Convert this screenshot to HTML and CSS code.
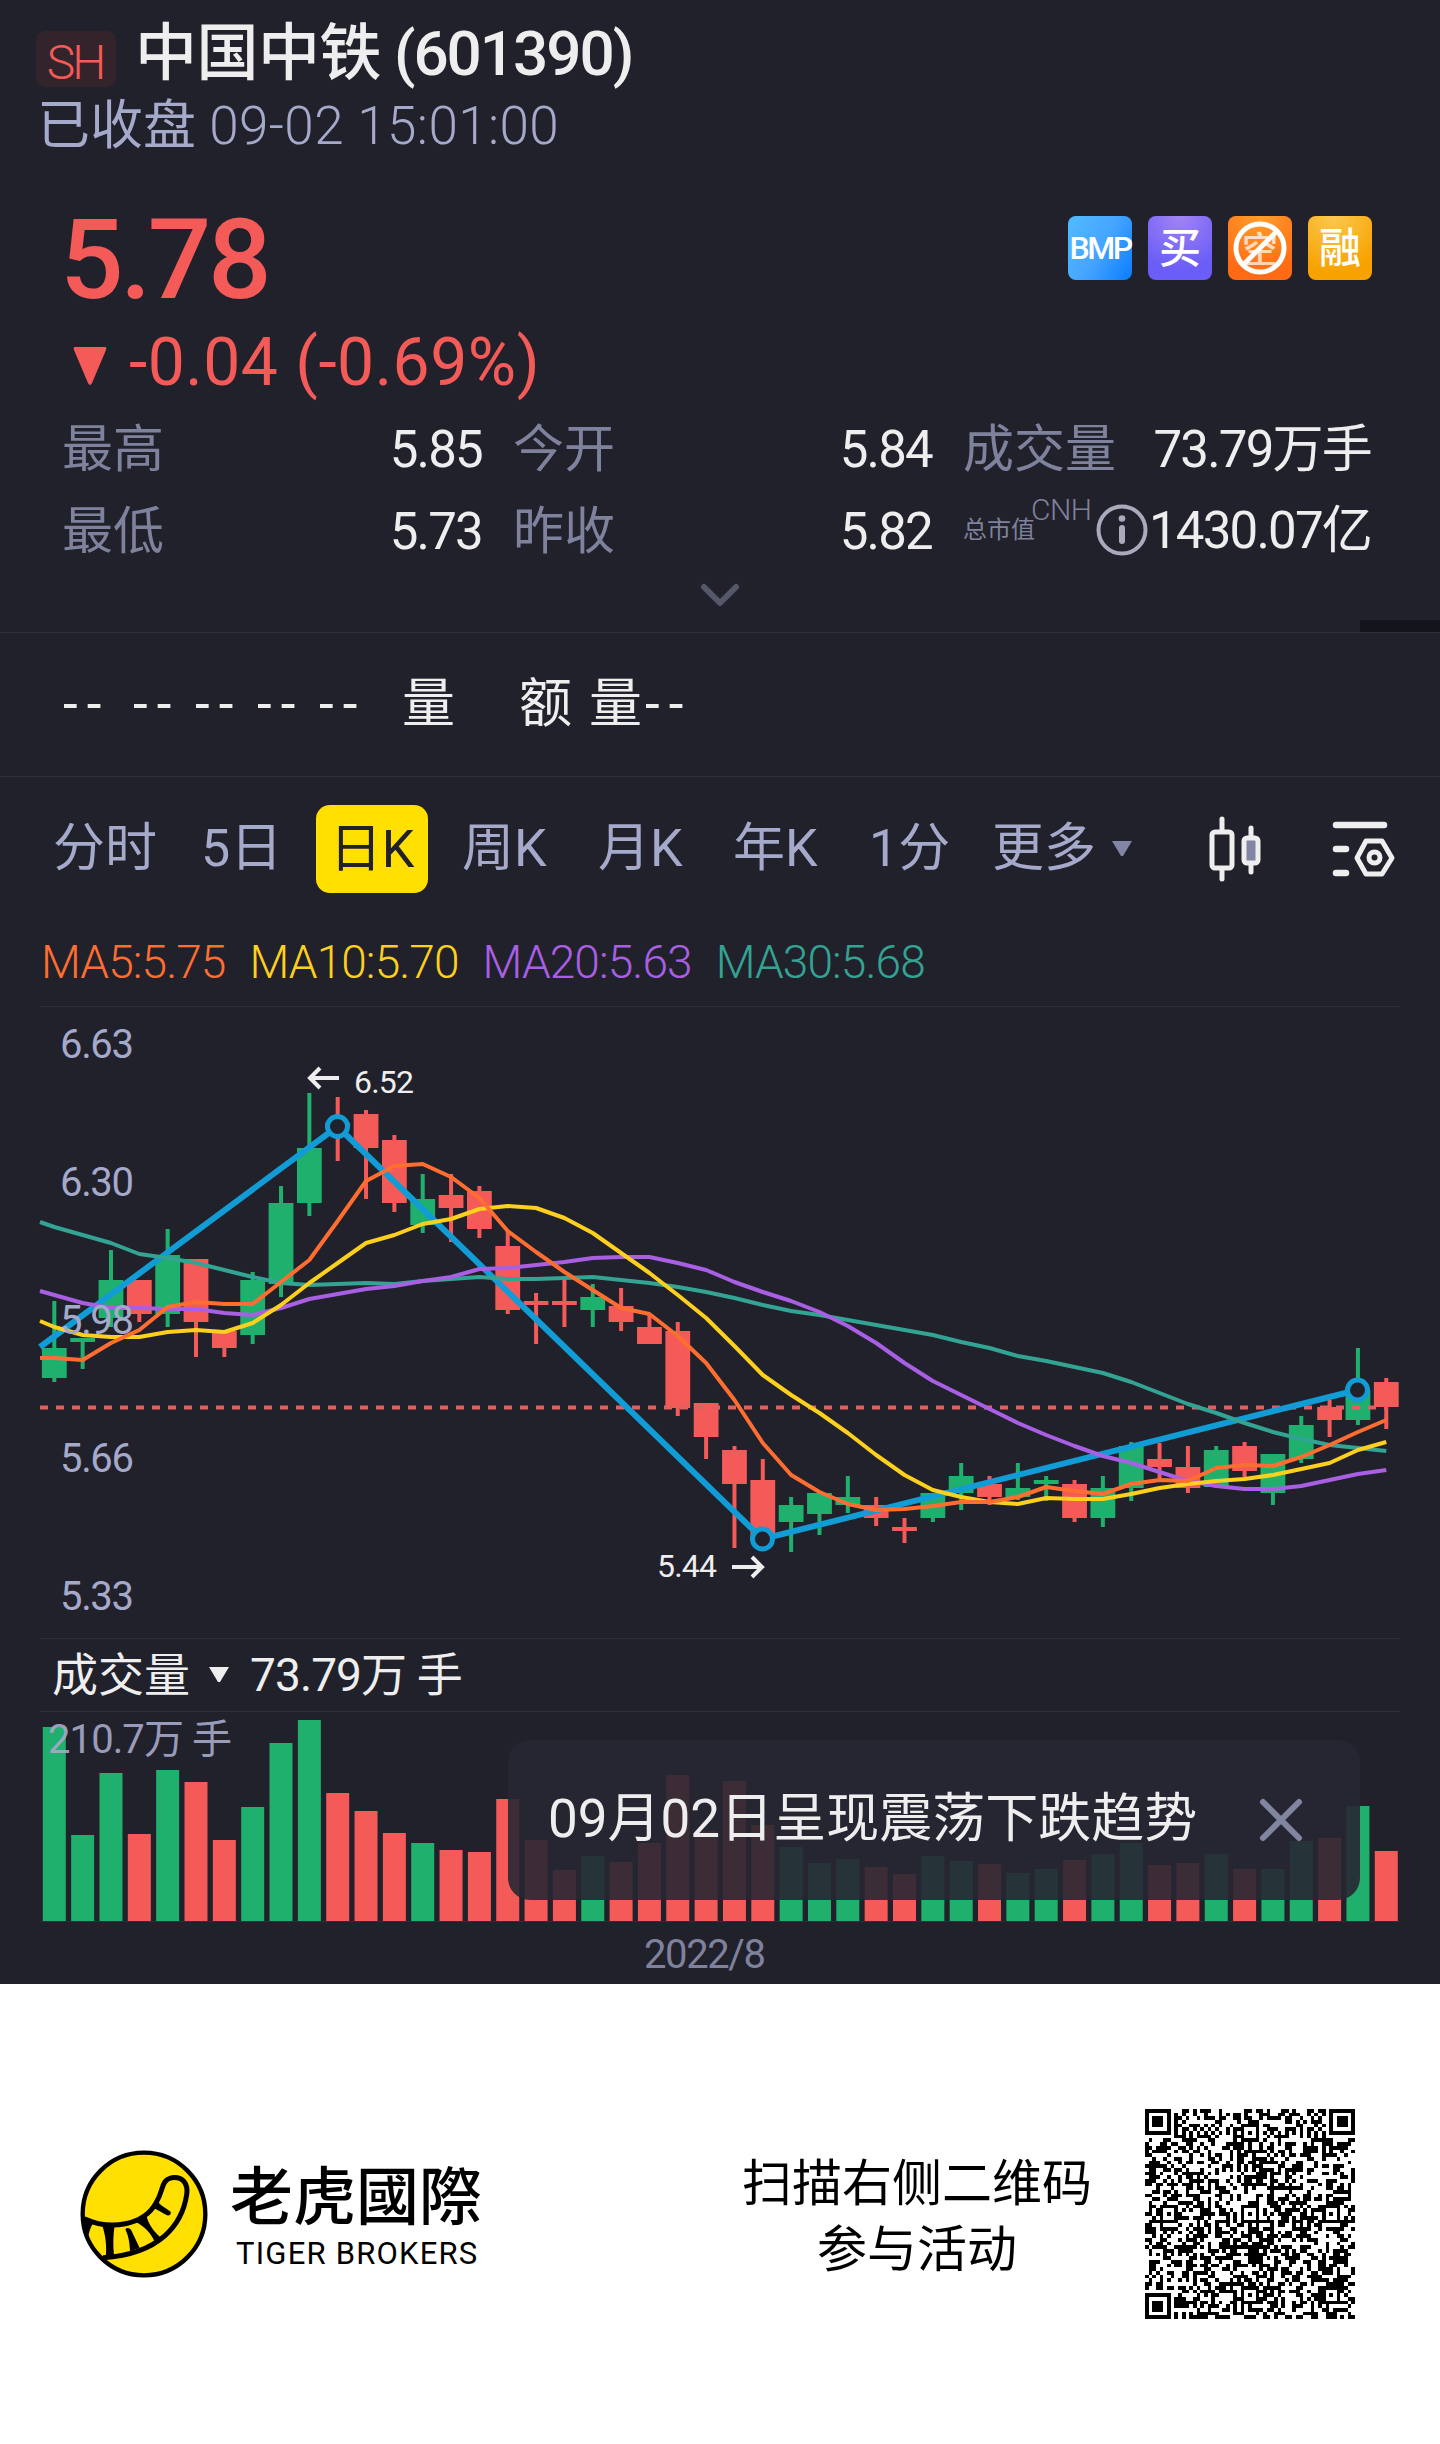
FILE: index.html
```html
<!DOCTYPE html>
<html lang="zh-CN">
<head>
  <meta charset="UTF-8">
  <meta name="viewport" content="width=device-width, initial-scale=1.0">
  <title>中国中铁 (601390)</title>
  <link rel="stylesheet" href="styles.css">
</head>
<body>

  <div class="quote">
    <header class="head">
      <div class="title-row">
        <span class="market">SH</span>
        <h1>中国中铁 <span class="code">(601390)</span></h1>
      </div>
      <div class="status">已收盘 <span class="time">09-02 15:01:00</span></div>
    </header>

    <section class="summary">
      <div class="price-row">
        <div class="price">5.78</div>
        <div class="badges">
          <span class="badge badge-bmp">BMP</span>
          <span class="badge badge-buy">买</span>
          <span class="badge badge-short"><i>空</i>
            <svg class="ban" viewBox="0 0 64 64"><circle cx="32" cy="32" r="24"/><path d="M16 48 48 16"/></svg>
          </span>
          <span class="badge badge-margin">融</span>
        </div>
      </div>
      <div class="change">
        <svg width="34" height="40" viewBox="0 0 34 40"><path d="M2 1H32Q34 1 33 4L19 37Q17 41 15 37L1 4Q0 1 2 1Z" fill="#f45a57"/></svg>
        <span>-0.04 (-0.69%)</span>
      </div>
      <div class="stats">
        <div class="stat"><label>最高</label><b>5.85</b></div>
        <div class="stat"><label>今开</label><b>5.84</b></div>
        <div class="stat"><label>成交量</label><b>73.79万手</b></div>
        <div class="stat"><label>最低</label><b>5.73</b></div>
        <div class="stat"><label>昨收</label><b>5.82</b></div>
        <div class="stat cap">
          <label>总市值</label><span class="cnh">CNH</span>
          <svg width="52" height="52" viewBox="0 0 52 52"><circle cx="26" cy="26" r="23.5" fill="none" stroke="#a9abbd" stroke-width="4"/><circle cx="26" cy="14.500" r="3.300" fill="#a9abbd"/><path d="M26 24V37" stroke="#a9abbd" stroke-width="6" stroke-linecap="round"/></svg>
          <b>1430.07亿</b>
        </div>
      </div>
      <div class="expand">
        <svg width="40" height="26" viewBox="0 0 40 26"><path d="M4 4 20 20 36 4" fill="none" stroke="#555869" stroke-width="6" stroke-linecap="round" stroke-linejoin="round"/></svg>
        <span class="corner"></span>
      </div>
    </section>

    <div class="depth">
      <span>--</span><span>--</span><span>--</span><span>--</span><span>--</span>
      <em>量</em><em>额</em><em>量</em><span>--</span>
    </div>

    <nav class="tabs">
      <a>分时</a>
      <a>5日</a>
      <a class="active">日K</a>
      <a>周K</a>
      <a>月K</a>
      <a>年K</a>
      <a>1分</a>
      <a>更多</a>
      <svg class="arrow" width="22" height="16" viewBox="0 0 22 16"><path d="M1 0H21L12 15H10Z" fill="#8285a3"/></svg>
      <svg width="54" height="66" viewBox="0 0 54 66" fill="none" stroke="#eee" stroke-width="5" stroke-linecap="round">
        <path d="M14 3V15M14 54V63M43 12V21M43 49V56"/>
        <rect x="4" y="16" width="20" height="36" rx="3"/>
        <rect x="36" y="22" width="14" height="25" rx="3" fill="#8285a3"/>
      </svg>
      <svg width="64" height="58" viewBox="0 0 64 58" fill="none" stroke="#eee" stroke-width="6.500" stroke-linecap="round" stroke-linejoin="round">
        <path d="M4 5H52M4 29H14M4 53H14"/>
        <path d="M34 21H50L60 38 50 54H34L25 38Z" stroke-width="5"/>
        <circle cx="42.500" cy="37.500" r="5.500" stroke-width="5"/>
      </svg>
    </nav>

    <div class="ma">
      <span class="ma5">MA5:5.75</span>
      <span class="ma10">MA10:5.70</span>
      <span class="ma20">MA20:5.63</span>
      <span class="ma30">MA30:5.68</span>
    </div>

    <svg id="kline" class="kline" width="1440" height="638" viewBox="0 0 1440 638"></svg>

    <div class="vol-head">
      <span>成交量</span>
      <svg width="22" height="16" viewBox="0 0 22 16"><path d="M1 0H21L12 15H10Z" fill="#eee"/></svg>
      <span class="vol-value">73.79万 手</span>
    </div>

    <div class="vol-wrap">
      <svg id="volume" width="1440" height="210" viewBox="0 0 1440 210"></svg>
      <div class="toast">
        <span>09月02日呈现震荡下跌趋势</span>
        <svg width="46" height="46" viewBox="0 0 46 46"><path d="M5 5 41 41M41 5 5 41" stroke="#8285a0" stroke-width="6" stroke-linecap="round"/></svg>
      </div>
    </div>
    <div class="date">2022/8</div>
  </div>

  <footer class="footer">
    <svg class="logo" width="128" height="128" viewBox="59 88 384 384">
      <circle cx="251" cy="280" r="184" fill="#ffe000" stroke="#000" stroke-width="13"/>
      <path d="M72 294C150 330 250 315 288 245C312 205 300 180 335 171C368 167 384 190 379 222C366 310 300 400 128 411" fill="none" stroke="#000" stroke-width="15"/>
      <path d="M66 288 100 304C90 320 86 335 83 352L68 325Z"/>
      <path d="M125 312 163 314C158 345 158 375 161 405L136 411C140 375 136 345 125 312Z"/>
      <path d="M195 326Q203 317 212 327L238 382 209 392C208 365 204 345 195 326Z"/>
      <path d="M227 304 258 284C264 310 278 330 300 350L283 363C270 335 252 318 227 304Z"/>
      <path d="M274 262 290 240C300 255 318 262 331 273Q333 286 320 284C304 276 290 264 274 262Z"/>
    </svg>
    <div class="brand">
      <div class="brand-cn">老虎國際</div>
      <div class="brand-en">TIGER BROKERS</div>
    </div>
    <div class="scan">扫描右侧二维码<br>参与活动</div>
    <svg id="qr" class="qr" width="210" height="210" viewBox="0 0 57 57" shape-rendering="crispEdges"></svg>
  </footer>

  <script src="chart.js"></script>
</body>
</html>
```

FILE: styles.css
```css
body {
  margin: 0;
  background-color: #fff;
  font-family: Roboto, "Noto Sans CJK SC", sans-serif;
  font-weight: 400;
  color: #eee;
}

svg {
  display: block;
  flex-shrink: 0;
}

h1, b, em, i {
  margin: 0;
  font-weight: inherit;
  font-style: normal;
}

.quote {
  width: 1440px;
  height: 1984px;
  background-color: #21212b;
  white-space: nowrap;
}

/* header */
.head {
  padding-top: 17px;
  height: 144px;
}

.title-row {
  display: flex;
  padding-left: 36px;
  height: 72px;
}

.market {
  width: 78px;
  height: 56px;
  margin: 14px 19px 0 0;
  padding-right: 2px;
  border-radius: 9px;
  background-color: #33242c;
  color: #f45a57;
  font-size: 48px;
  line-height: 64px;
  letter-spacing: -3px;
  text-align: center;
  font-weight: 300;
}

h1 {
  font-size: 62px;
  line-height: 74px;
  font-weight: 500;
  letter-spacing: -0.5px;
}

.code {
  letter-spacing: -2px;
  margin-left: -2px;
}

.status {
  padding-left: 37px;
  font-size: 53px;
  line-height: 74px;
  color: #a5a9ca;
}

.time {
  font-weight: 300;
  letter-spacing: 0.4px;
}

/* price */
.price-row {
  display: flex;
  justify-content: space-between;
  height: 158px;
  padding: 0 68px 0 60px;
}

.price {
  margin-top: 38px;
  font-size: 112px;
  line-height: 122px;
  font-weight: 500;
  letter-spacing: -3.5px;
  color: #f45a57;
}

.badges {
  display: flex;
  gap: 16px;
  margin-top: 55px;
}

.badge {
  position: relative;
  width: 64px;
  height: 64px;
  border-radius: 8px;
  font-size: 42px;
  line-height: 66px;
  font-weight: 500;
  text-align: center;
  color: #fff;
}

.badge-bmp {
  font-size: 32px;
  line-height: 64px;
  letter-spacing: -2.5px;
  background: linear-gradient(120deg, #50bcff, #46a5ff 50%, #0a7cff);
}

.badge-buy {
  background: radial-gradient(circle at 50% 0, #a284f2, #6a5df8 75%);
}

.badge-short {
  background: radial-gradient(circle at 50% 0, #ff9f2c, #ff6a14 80%);
}

.badge-short i {
  font-size: 36px;
  opacity: 0.7;
}

.badge-margin {
  background: radial-gradient(circle at 40% 0, #fcc850, #f7a200 75%);
}

.ban {
  position: absolute;
  left: 0;
  top: 0;
  fill: none;
  stroke: #fff;
  stroke-width: 5;
}

.change {
  display: flex;
  align-items: center;
  gap: 22px;
  height: 88px;
  padding-left: 73px;
  font-size: 66px;
  line-height: 92px;
  color: #f45a57;
  letter-spacing: 0.5px;
}

.change svg {
  margin-top: 5px;
}

.stats {
  display: grid;
  grid-template-columns: 420px 419px 408px;
  grid-auto-rows: 82px;
  column-gap: 31px;
  padding-left: 62px;
  font-size: 51px;
  line-height: 85px;
}

.stat {
  display: flex;
  justify-content: space-between;
}

.stat label {
  color: #7f829d;
}

.stat b {
  letter-spacing: -1.8px;
}

.cap {
  align-items: center;
  justify-content: flex-start;
}

.cap label {
  font-size: 24px;
}

.cnh {
  align-self: flex-start;
  margin-left: -4px;
  font-size: 30px;
  line-height: 42px;
  font-weight: 300;
  letter-spacing: -0.5px;
  color: #7f829d;
}

.cap svg {
  margin-left: auto;
}

.cap b {
  margin-left: 1px;
}

.expand {
  position: relative;
  display: flex;
  justify-content: center;
  height: 61px;
  padding-top: 12px;
  box-sizing: border-box;
}

.corner {
  position: absolute;
  right: 0;
  bottom: 0;
  width: 80px;
  height: 12px;
  background-color: #14141d;
}

.depth, .tabs {
  display: flex;
  align-items: center;
  height: 143px;
  border-top: 1px solid #2e2e3a;
}

.depth {
  padding-left: 63px;
  font-size: 53px;
  line-height: 147px;
}

.depth span {
  width: 62px;
  letter-spacing: 9px;
}

.depth span:first-child {
  width: 70px;
}

.depth em {
  margin-left: 20px;
}

.depth em:nth-of-type(1) {
  margin-left: 21px;
  margin-right: 44px;
}

.depth em:nth-of-type(3) {
  margin-left: 17px;
  margin-right: 3px;
}

/* period tabs */
.tabs {
  display: grid;
  grid-template-columns: 148px 115px 112px 170px 135px 136px 123px 119px 97px 124px 64px;
  padding-left: 53px;
  font-size: 52px;
  line-height: 90px;
  color: #a5a9ca;
}

.tabs .active {
  height: 88px;
  border-radius: 14px;
  background-color: #ffe000;
  color: #21212b;
  text-align: center;
}

.tabs .active + a {
  padding-left: 34px;
}

.ma {
  display: flex;
  gap: 24px;
  height: 80px;
  padding-left: 41px;
  font-size: 46px;
  line-height: 84px;
  font-weight: 300;
  letter-spacing: -0.9px;
}

.ma5 {
  color: #ff6e30;
}

.ma10 {
  color: #fdd01e;
}

.ma20 {
  color: #a95fe4;
}

.ma30 {
  color: #33a393;
}

.axis {
  fill: #a5a9ca;
  font-size: 40px;
}

.mark {
  fill: #eee;
  font-size: 32px;
}

/* volume */
.vol-head {
  display: flex;
  align-items: center;
  height: 72px;
  margin: 0 40px;
  padding-left: 12px;
  border-top: 1px solid #2e2e3a;
  border-bottom: 1px solid #2e2e3a;
  font-size: 46px;
  line-height: 74px;
}

.vol-head svg {
  margin: 0 20px 0 18px;
}

.vol-value {
  letter-spacing: -0.9px;
}

.vol-wrap {
  position: relative;
}

.toast {
  position: absolute;
  left: 508px;
  top: 28px;
  display: flex;
  align-items: center;
  justify-content: space-between;
  width: 852px;
  height: 160px;
  padding: 0 56px 0 40px;
  box-sizing: border-box;
  border-radius: 22px;
  background-color: rgba(39, 39, 51, 0.9);
  font-size: 53px;
  line-height: 60px;
}

.toast span {
  padding-bottom: 3px;
}

.date {
  padding-left: 644px;
  font-size: 40px;
  line-height: 65px;
  letter-spacing: -1.4px;
  color: #7f829d;
}

/* footer */
.footer {
  display: flex;
  align-items: center;
  width: 1440px;
  height: 460px;
  color: #000;
  white-space: nowrap;
}

.logo {
  margin-left: 80px;
}

.brand {
  width: 250px;
  margin-left: 22px;
}

.brand-cn {
  font-family: "Noto Sans CJK TC", sans-serif;
  font-size: 63px;
  line-height: 64px;
  font-weight: 500;
}

.brand-en {
  padding: 8px 0 0 6px;
  margin-bottom: -8px;
  font-size: 31px;
  line-height: 44px;
  letter-spacing: 1.2px;
}

.scan {
  margin-left: 262px;
  padding-top: 6px;
  font-size: 50px;
  line-height: 66px;
  text-align: center;
}

.qr {
  margin-left: 53px;
}
```

FILE: chart.js
```javascript
const GREEN = '#20b06e';
const RED = '#f45a57';
const STEP = 28.34;
const FIRST = 54.3;

// [color, body top, body bottom, wick top, wick bottom, volume top]
const candles = [
  ['g', 348, 378, 301, 382, 15], ['g', 338, 342, 338, 369, 123], ['g', 280, 318, 250, 327, 61],
  ['r', 280, 314, 280, 322, 122], ['g', 255, 314, 229, 327, 58], ['r', 259, 322, 259, 357, 70],
  ['r', 331, 348, 331, 357, 128], ['g', 280, 335, 272, 344, 95], ['g', 203, 284, 186, 297, 31],
  ['g', 148, 203, 93, 216, 8], ['r', 123, 127, 97, 161, 81], ['r', 114, 148, 110, 199, 99],
  ['r', 140, 203, 135, 212, 121], ['g', 199, 225, 174, 233, 131], ['r', 195, 208, 174, 242, 138],
  ['r', 191, 229, 186, 238, 140], ['r', 246, 310, 230, 314, 87], ['r', 301, 305, 293, 344, 128],
  ['r', 301, 305, 277, 327, 158], ['g', 297, 310, 284, 327, 144], ['r', 306, 322, 288, 331, 150],
  ['r', 327, 344, 315, 344, 131], ['r', 331, 408, 322, 416, 63], ['r', 403, 437, 403, 459, 119],
  ['r', 450, 484, 446, 548, 69], ['r', 480, 538, 459, 538, 113], ['g', 505, 522, 497, 552, 135],
  ['g', 493, 514, 493, 535, 151], ['g', 497, 505, 476, 513, 147], ['r', 505, 518, 497, 526, 155],
  ['r', 527, 531, 518, 543, 162], ['g', 493, 518, 493, 522, 144], ['g', 476, 493, 463, 510, 149],
  ['r', 484, 497, 476, 505, 152], ['g', 488, 497, 463, 500, 161], ['g', 480, 484, 476, 501, 157],
  ['r', 484, 518, 480, 522, 148], ['g', 488, 518, 476, 527, 142], ['g', 446, 488, 442, 501, 131],
  ['r', 459, 467, 443, 478, 153], ['r', 467, 488, 446, 493, 151], ['g', 450, 487, 446, 488, 142],
  ['r', 446, 471, 442, 477, 157], ['g', 454, 493, 454, 505, 157], ['g', 425, 459, 416, 463, 129],
  ['r', 407, 420, 400, 437, 126], ['g', 390, 420, 348, 425, 94], ['r', 382, 407, 378, 429, 139]
];

// first value is the left edge of the plot, the rest go candle by candle
const averages = {
  '#33a393': [222, 227, 235, 243, 254, 258, 263, 270, 277, 283, 285, 284, 283, 284, 281, 279, 277, 279, 279, 278, 277, 280, 283, 287, 292, 298, 305, 311, 315, 320, 325, 330, 335, 342, 348, 356, 361, 367, 373, 382, 393, 404, 413, 423, 432, 439, 445, 448, 451],
  '#a95fe4': [291, 295, 303, 308, 308, 309, 309, 313, 315, 308, 299, 294, 289, 286, 281, 277, 269, 268, 265, 262, 258, 257, 257, 263, 270, 282, 292, 301, 312, 326, 343, 363, 381, 395, 409, 423, 435, 446, 456, 463, 472, 481, 486, 489, 489, 486, 480, 474, 470],
  '#fdd01e': [321, 327, 335, 337, 337, 332, 330, 332, 323, 305, 283, 263, 243, 235, 224, 219, 209, 206, 208, 218, 233, 253, 273, 295, 318, 346, 375, 395, 413, 433, 455, 475, 490, 497, 502, 504, 498, 499, 499, 494, 488, 484, 481, 479, 475, 469, 463, 450, 442],
  '#ff6e30': [358, 358, 360, 343, 330, 307, 302, 304, 304, 282, 260, 221, 181, 166, 164, 177, 198, 231, 252, 272, 290, 308, 314, 336, 363, 400, 443, 475, 492, 504, 510, 509, 506, 502, 502, 497, 487, 491, 494, 484, 480, 481, 468, 465, 466, 457, 445, 432, 420]
};

function x(i) {
  return FIRST + i * STEP;
}

function drawKline() {
  let out = '<path d="M40 6.500H1400" stroke="#2e2e3a"/>';

  candles.forEach(([c, top, bottom, high, low], i) => {
    const color = c === 'g' ? GREEN : RED;
    out += `<rect x="${x(i) - 2}" y="${high}" width="4" height="${low - high}" fill="${color}"/>`;
    out += `<rect x="${x(i) - 12.4}" y="${top}" width="24.800" height="${bottom - top}" fill="${color}"/>`;
  });

  out += '<path d="M40 407.500H1386" stroke="#e06062" stroke-width="4" stroke-dasharray="8 8"/>';
  out += '<path d="M40 347 337.500 126.500 762.500 539 1357.500 390" fill="none" stroke="#119cd6" stroke-width="6"/>';

  for (const color in averages) {
    const points = averages[color].map((y, i) => `${i === 0 ? 40 : x(i - 1)},${y}`).join(' ');
    out += `<polyline points="${points}" fill="none" stroke="${color}" stroke-width="4" stroke-linejoin="round"/>`;
  }

  [[337.5, 126.5], [762.5, 539], [1357.5, 390]].forEach(([cx, cy]) => {
    out += `<circle cx="${cx}" cy="${cy}" r="10" fill="#21212b" stroke="#119cd6" stroke-width="5"/>`;
  });

  ['6.63', '6.30', '5.98', '5.66', '5.33'].forEach((label, i) => {
    out += `<text class="axis" x="60" y="${58 + i * 138}" textLength="74">${label}</text>`;
  });

  out += '<text class="mark" x="354" y="93" textLength="60">6.52</text>';
  out += '<text class="mark" x="657" y="577" textLength="60">5.44</text>';
  out += '<path d="M339 78H310M320 68 310 78 320 88M732 567H761M752 557 762 567 752 577" fill="none" stroke="#eee" stroke-width="4"/>';

  document.getElementById('kline').innerHTML = out;
}

function drawVolume() {
  let out = '<path d="M40 209.500H1400" stroke="#2e2e3a"/>';
  candles.forEach((candle, i) => {
    const top = candle[5];
    out += `<rect x="${x(i) - 11.5}" y="${top}" width="23" height="${209 - top}" fill="${candle[0] === 'g' ? GREEN : RED}"/>`;
  });
  out += '<text class="axis" x="48" y="41" textLength="184" opacity="0.9">210.7万 手</text>';
  document.getElementById('volume').innerHTML = out;
}

function drawQr() {
  const size = 57;
  let seed = 601390;
  let d = '';

  // square ring pattern centred on (cx, cy): is the module dark?
  function ring(col, row, cx, cy, radius) {
    const r = Math.max(Math.abs(col - cx), Math.abs(row - cy));
    if (r > radius) return null;
    return radius === 4 ? (r === 3 || r < 2) : r !== 1;
  }

  for (let row = 0; row < size; row++) {
    for (let col = 0; col < size; col++) {
      seed = (seed * 1103515245 + 12345) % 2147483648;
      let dark = (seed >> 16) % 2 === 0;
      if (row === 6) dark = col % 2 === 0;
      if (col === 6) dark = row % 2 === 0;
      [[28, 6], [6, 28], [28, 28], [50, 28], [28, 50], [50, 50]].forEach(([cx, cy]) => {
        const v = ring(col, row, cx, cy, 2);
        if (v !== null) dark = v;
      });
      [[3, 3], [53, 3], [3, 53]].forEach(([cx, cy]) => {
        const v = ring(col, row, cx, cy, 4);
        if (v !== null) dark = v;
      });
      if (dark) d += `M${col} ${row}h1v1h-1z`;
    }
  }
  document.getElementById('qr').innerHTML = `<path d="${d}"/>`;
}

drawKline();
drawVolume();
drawQr();
```
